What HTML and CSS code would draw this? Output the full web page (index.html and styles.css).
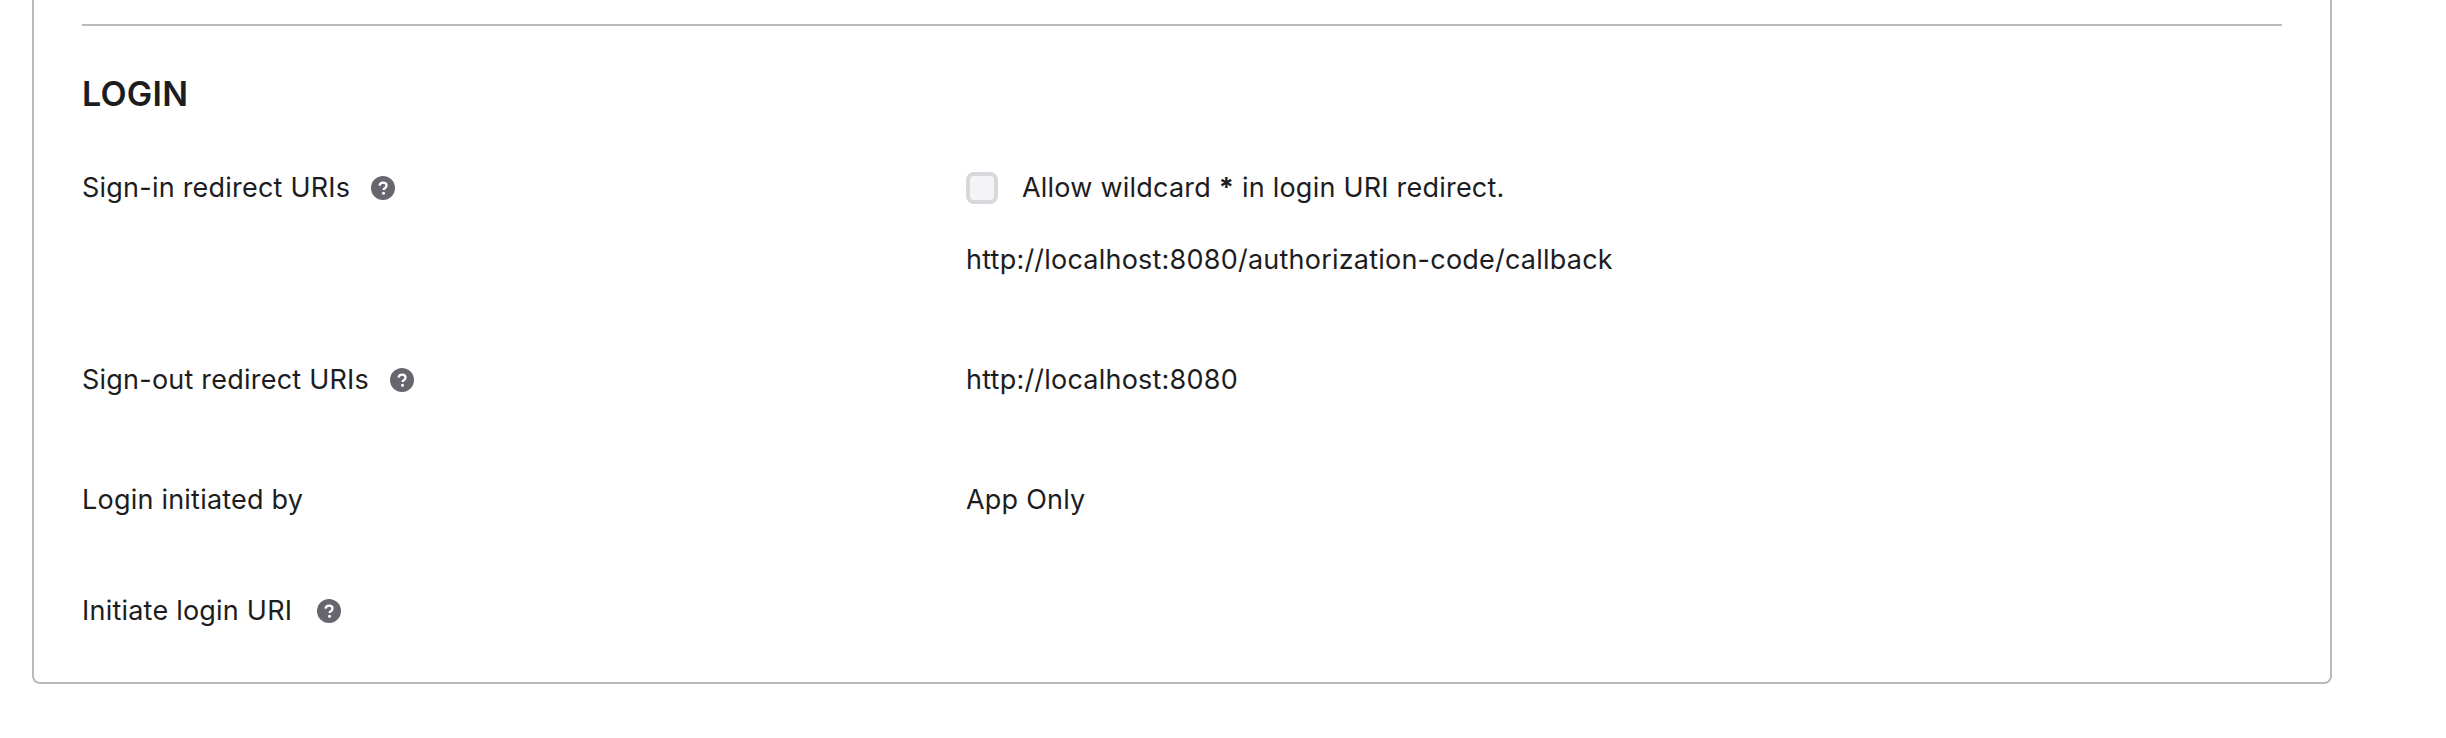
FILE: index.html
```html
<!DOCTYPE html>
<html lang="en">
<head>
<meta charset="utf-8">
<title>Login settings</title>
<link rel="stylesheet" href="styles.css">
</head>
<body>
<main class="card">
  <hr class="divider">
  <h2 class="heading">LOGIN</h2>
  <div class="row row-signin">
    <div class="label">Sign-in redirect URIs <svg class="help" viewBox="0 0 24 24" aria-hidden="true"><circle cx="12" cy="12" r="12" fill="#66666f"/><path d="M8.6 9.6c.2-1.9 1.6-2.9 3.5-2.9 2 0 3.4 1.1 3.4 2.8 0 1.3-.7 2-1.7 2.7-.9.6-1.2 1-1.2 1.9" fill="none" stroke="#fff" stroke-width="2.3"/><circle cx="12.5" cy="17.2" r="1.5" fill="#fff"/></svg></div>
    <div class="value">
      <label class="check"><span class="box"></span><span>Allow wildcard <b class="star">*</b> in login URI redirect.</span></label>
      <div class="url">http://localhost:8080/authorization-code/callback</div>
    </div>
  </div>
  <div class="row row-signout">
    <div class="label">Sign-out redirect URIs <svg class="help" viewBox="0 0 24 24" aria-hidden="true"><circle cx="12" cy="12" r="12" fill="#66666f"/><path d="M8.6 9.6c.2-1.9 1.6-2.9 3.5-2.9 2 0 3.4 1.1 3.4 2.8 0 1.3-.7 2-1.7 2.7-.9.6-1.2 1-1.2 1.9" fill="none" stroke="#fff" stroke-width="2.3"/><circle cx="12.5" cy="17.2" r="1.5" fill="#fff"/></svg></div>
    <div class="value">http://localhost:8080</div>
  </div>
  <div class="row row-initiated">
    <div class="label">Login initiated by</div>
    <div class="value">App Only</div>
  </div>
  <div class="row">
    <div class="label">Initiate login URI <svg class="help help-wide" viewBox="0 0 24 24" aria-hidden="true"><circle cx="12" cy="12" r="12" fill="#66666f"/><path d="M8.6 9.6c.2-1.9 1.6-2.9 3.5-2.9 2 0 3.4 1.1 3.4 2.8 0 1.3-.7 2-1.7 2.7-.9.6-1.2 1-1.2 1.9" fill="none" stroke="#fff" stroke-width="2.3"/><circle cx="12.5" cy="17.2" r="1.5" fill="#fff"/></svg></div>
    <div class="value"></div>
  </div>
</main>
</body>
</html>
```
FILE: styles.css
```css
* { box-sizing: border-box; }
html, body { margin: 0; background: #fff; }
body {
  padding: 0 114px 0 32px;
  font-family: Inter, "Noto Sans", sans-serif;
  font-size: 27px;
  letter-spacing: 0.22px;
  line-height: 36px;
  color: #1d1d21;
}
.card {
  height: 684px;
  padding: 24px 48px 0;
  border: 2px solid #b8b8bf;
  border-top: 0;
  border-radius: 0 0 8px 8px;
}
.divider {
  height: 2px;
  margin: 0;
  border: 0;
  background: #b8b8bf;
}
.heading {
  margin: 50px 0 0;
  font-size: 34px;
  line-height: 36px;
  font-weight: 600;
}
.row {
  display: grid;
  grid-template-columns: 884px 1fr;
}
.row-signin { margin-top: 58px; height: 192px; }
.row-signout { height: 120px; }
.row-initiated { height: 111px; }
.label { display: flex; align-items: center; height: 36px; }
.help { width: 24px; height: 24px; margin-left: 21px; flex: none; }
.help-wide { margin-left: 25px; }
.check { display: flex; align-items: center; height: 36px; }
.box {
  width: 32px;
  height: 32px;
  margin-right: 24px;
  border: 4px solid #d7d7dc;
  border-radius: 8px;
  background: #f4f4f6;
  flex: none;
}
.star { font-weight: 700; }
.url { margin-top: 36px; }
```
